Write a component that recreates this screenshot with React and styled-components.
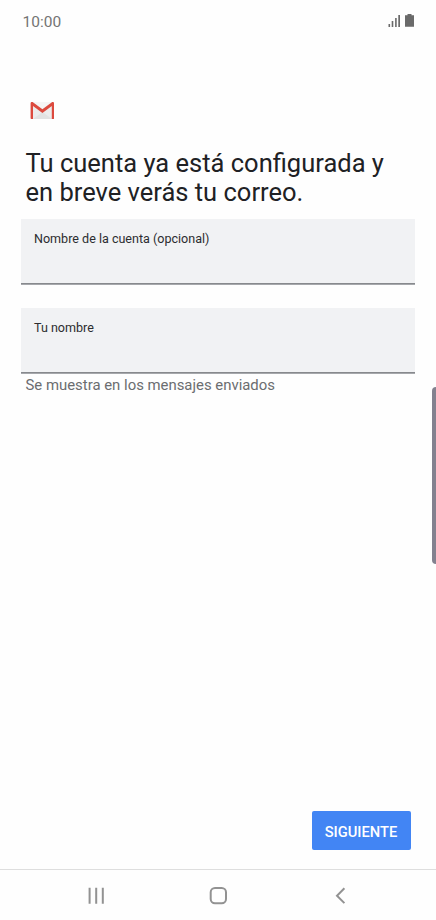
import styled, { createGlobalStyle } from "styled-components";

const GlobalStyle = createGlobalStyle`
  * {
    box-sizing: border-box;
  }

  body {
    margin: 0;
    background: #fefefe;
    font-family: Roboto, "Liberation Sans", sans-serif;
  }
`;

const Screen = styled.div`
  position: relative;
  display: flex;
  flex-direction: column;
  height: 920px;
  overflow: hidden;
  background: #fefefe;
`;

const StatusBar = styled.header`
  display: flex;
  justify-content: space-between;
  height: 42px;
  padding: 0 22px;
  color: #747474;
`;

const Clock = styled.span`
  padding-left: 0.5px;
  font-size: 15.5px;
  line-height: 44px;
`;

const StatusIcons = styled.svg`
  width: 28px;
  height: 42px;
  fill: #6a6a6a;
`;

const Content = styled.main`
  display: flex;
  flex: 1;
  flex-direction: column;
  padding: 59px 21px 0;
`;

const Logo = styled.svg`
  width: 24px;
  height: 19px;
  margin-left: 9px;
`;

const Title = styled.h1`
  margin: 29px 0 0 4.5px;
  font-size: 25.5px;
  font-weight: 400;
  line-height: 29px;
  color: #202124;
  white-space: nowrap;
`;

const Field = styled.label`
  display: block;
  height: 66px;
  margin-top: ${(props) => props.$top}px;
  padding: 12px 13px 0;
  border-bottom: 1px solid #a6a8ac;
  background: #f1f2f4;
  box-shadow: inset 0 -1px #87898d;
`;

const FieldLabel = styled.span`
  display: block;
  font-size: 12.55px;
  line-height: 16px;
  color: #2c2d30;
`;

const Hint = styled.p`
  margin: 2px 0 0 4.5px;
  font-size: 14.9px;
  line-height: 18px;
  color: #6b6d70;
`;

const Actions = styled.div`
  display: flex;
  justify-content: flex-end;
  padding: 0 25px 19px 0;
`;

const NextButton = styled.button`
  width: 99px;
  height: 39px;
  padding: 3px 1px 0 0;
  border: 0;
  border-radius: 2px;
  background: #4285f4;
  color: #fff;
  font-family: inherit;
  font-size: 14.7px;
  font-weight: 500;
  line-height: 36px;
`;

const NavBar = styled.nav`
  display: flex;
  height: 51px;
  padding: 1px 35px 0;
  border-top: 1px solid #dedede;
`;

const NavItem = styled.div`
  display: flex;
  flex: 1;
  align-items: center;
  justify-content: center;
`;

const NavIcon = styled.svg`
  width: 20px;
  height: 20px;
  fill: none;
  stroke: #929292;
  stroke-width: 2;
`;

// Samsung edge panel handle, it floats over the page
const EdgeHandle = styled.div`
  position: absolute;
  top: 387px;
  right: 0;
  width: 4px;
  height: 177px;
  border-radius: 4px 0 0 4px;
  background: #83818f;
`;

function GmailLogo() {
  return (
    <Logo viewBox="0 0 24 19">
      <path d="M2 1h21v17H2z" fill="#ececec" />
      <path d="M3 18l9.5-7 9.5 7z" fill="#e2e2e2" />
      <path d="M3 1h19l-9.5 7z" fill="#f5f5f5" />
      <path
        d="M.6 2.4C.6 1.5 1.2 1 2 1c.5 0 .9.2 1.2.4l9.2 6.9 9.2-6.9c.3-.2.7-.4 1.2-.4.8 0 1.4.5 1.4 1.4V17c0 .6-.4 1-1 1h-1.4V4.9l-9.4 7-9.4-7V18H1.6c-.6 0-1-.4-1-1z"
        fill="#dc4a3e"
      />
    </Logo>
  );
}

export default function App() {
  return (
    <>
      <GlobalStyle />
      <Screen>
        <StatusBar>
          <Clock>10:00</Clock>
          <StatusIcons viewBox="0 0 28 42">
            <path d="M2.5 24h1.6v3H2.5zM5.7 21h1.6v6H5.7zM9.1 18h1.6v9H9.1zM12.3 15h1.7v12h-1.7z" />
            <path d="M21.5 14h4v1.3H28V26.7h-9V15.3h2.5z" />
          </StatusIcons>
        </StatusBar>

        <Content>
          <GmailLogo />
          <Title>
            Tu cuenta ya está configurada y
            <br />
            en breve verás tu correo.
          </Title>
          <Field $top={12}>
            <FieldLabel>Nombre de la cuenta (opcional)</FieldLabel>
          </Field>
          <Field $top={23}>
            <FieldLabel>Tu nombre</FieldLabel>
          </Field>
          <Hint>Se muestra en los mensajes enviados</Hint>
        </Content>

        <Actions>
          <NextButton type="button">SIGUIENTE</NextButton>
        </Actions>

        <NavBar>
          <NavItem>
            <NavIcon viewBox="0 0 20 20">
              <path d="M3.6 1.7v16M10.2 1.7v16M16.8 1.7v16" />
            </NavIcon>
          </NavItem>
          <NavItem>
            <NavIcon viewBox="0 0 20 20">
              <rect x="2.7" y="2" width="15.3" height="15.3" rx="4.3" />
            </NavIcon>
          </NavItem>
          <NavItem>
            <NavIcon viewBox="0 0 20 20">
              <path d="M14.4 2.3L7 9.7l7.4 7.4" />
            </NavIcon>
          </NavItem>
        </NavBar>
        <EdgeHandle />
      </Screen>
    </>
  );
}
